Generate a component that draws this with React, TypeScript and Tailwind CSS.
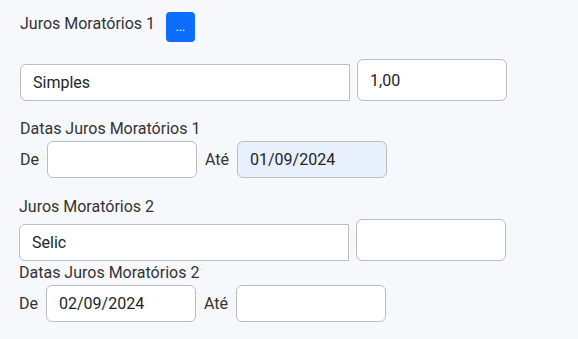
import { useState } from 'react'

const box =
  'h-[37px] border border-[#bdbdbd] px-[12px] text-[16px] text-[#212529] outline-none'

function DateRow({ de, ate, ateFilled }: { de: string; ate: string; ateFilled?: boolean }) {
  return (
    <div className="flex items-center">
      <span className="w-[27px] leading-6">De</span>
      <input
        defaultValue={de}
        className={`${box} w-[150px] rounded-[6px] bg-white`}
      />
      <span className="ml-[8px] w-[32px] leading-6">Até</span>
      <input
        defaultValue={ate}
        className={`${box} w-[150px] rounded-[6px] ${ateFilled ? 'bg-[#e8f0fe]' : 'bg-white'}`}
      />
    </div>
  )
}

export default function App() {
  const [tipo1] = useState('Simples')
  const [tipo2] = useState('Selic')

  return (
    <div
      className="h-[339px] w-[578px] overflow-hidden bg-[#f7f8fc] text-[16px] text-[#333333]"
      style={{ fontFamily: 'Roboto, "Liberation Sans", sans-serif' }}
    >
      <div className="pl-[20px] pt-[12px]">
        <div className="flex items-start">
          <span className="leading-6">Juros Moratórios 1</span>
          <button className="ml-[11px] flex h-[30px] w-[29px] items-end justify-center rounded-[4px] bg-[#0d6efd] pb-[9px] text-[12px] leading-none text-white">
            ...
          </button>
        </div>

        <div className="mt-[17px] flex items-end">
          <input
            defaultValue={tipo1}
            className={`${box} w-[330px] rounded-l-[6px] bg-white`}
          />
          <input
            defaultValue="1,00"
            className={`${box} ml-[7px] h-[42px] w-[150px] rounded-[6px] bg-white`}
          />
        </div>

        <div className="mt-[16px] leading-6">Datas Juros Moratórios 1</div>
        <DateRow de="" ate="01/09/2024" ateFilled />
      </div>

      <div className="mt-[17px] pl-[19px]">
        <div className="leading-6">Juros Moratórios 2</div>
        <div className="flex items-end">
          <input
            defaultValue={tipo2}
            className={`${box} w-[330px] rounded-l-[6px] bg-white`}
          />
          <input
            defaultValue=""
            className={`${box} ml-[7px] h-[42px] w-[150px] rounded-[6px] bg-white`}
          />
        </div>
        <div className="leading-6">Datas Juros Moratórios 2</div>
        <DateRow de="02/09/2024" ate="" />
      </div>
    </div>
  )
}
